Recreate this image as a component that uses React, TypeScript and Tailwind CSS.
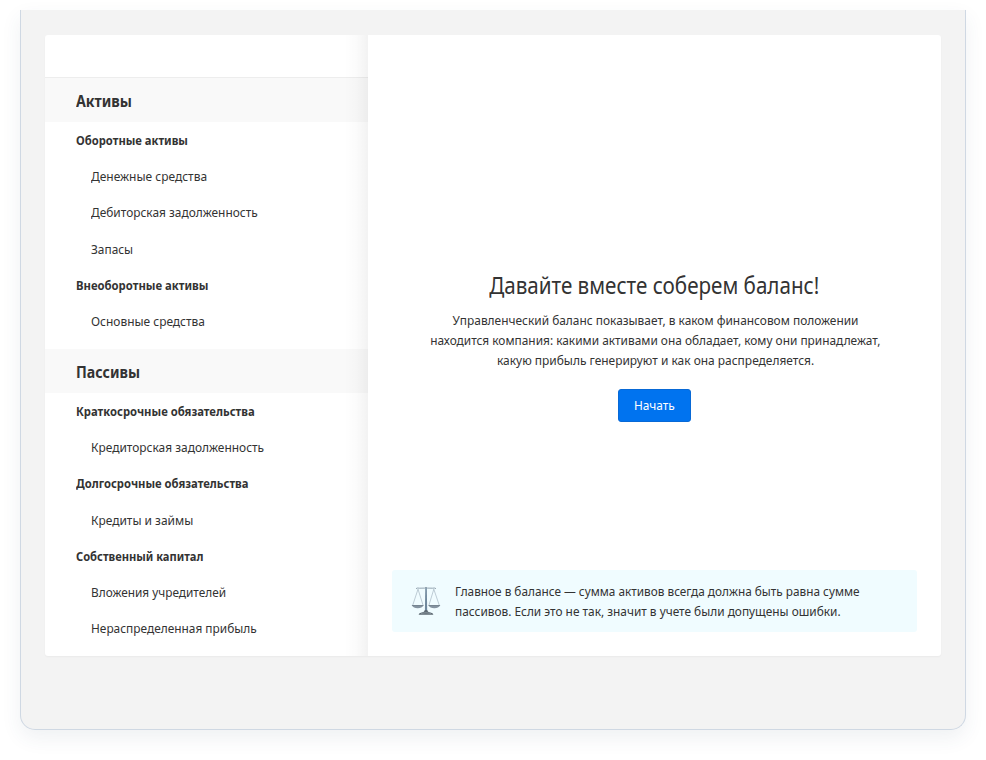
type Row = { text: string; scale: string; group?: boolean };

const assets: Row[] = [
  { text: "Оборотные активы", scale: "scale-x-[0.864]", group: true },
  { text: "Денежные средства", scale: "scale-x-[0.921]" },
  { text: "Дебиторская задолженность", scale: "scale-x-[0.916]" },
  { text: "Запасы", scale: "scale-x-[0.913]" },
  { text: "Внеоборотные активы", scale: "scale-x-[0.870]", group: true },
  { text: "Основные средства", scale: "scale-x-[0.919]" },
];

const liabilities: Row[] = [
  { text: "Краткосрочные обязательства", scale: "scale-x-[0.867]", group: true },
  { text: "Кредиторская задолженность", scale: "scale-x-[0.918]" },
  { text: "Долгосрочные обязательства", scale: "scale-x-[0.866]", group: true },
  { text: "Кредиты и займы", scale: "scale-x-[0.919]" },
  { text: "Собственный капитал", scale: "scale-x-[0.857]", group: true },
  { text: "Вложения учредителей", scale: "scale-x-[0.910]" },
  { text: "Нераспределенная прибыль", scale: "scale-x-[0.914]" },
];

function Section({ title, titleScale, rows }: { title: string; titleScale: string; rows: Row[] }) {
  return (
    <section>
      <h2 className="flex h-11 items-center bg-[#f9f9f9] pt-[2px] pl-[30.5px] text-[16.5px] font-bold">
        <span className={`origin-left ${titleScale}`}>{title}</span>
      </h2>
      <ul>
        {rows.map((row) => (
          <li
            key={row.text}
            className={`flex h-[36.25px] items-center pt-px text-[13px] whitespace-nowrap ${row.group ? "pl-[30.5px] font-bold" : "pl-[45.75px]"}`}
          >
            <span className={`origin-left ${row.scale}`}>{row.text}</span>
          </li>
        ))}
      </ul>
    </section>
  );
}

function Scales() {
  return (
    <svg className="h-[30px] w-[30px] shrink-0" viewBox="0 0 30 30" fill="none">
      <g stroke="#9aabb8" strokeWidth="0.6">
        <path d="M7 3.2 1.8 19M7 3.2 12 19M22.8 3.2 18 19M22.8 3.2 28.2 19" />
      </g>
      <path d="M5 2.6Q6.6 1.6 8.4 2.2L13.5 2.1 15 1.2 16.5 2.1 21.6 2.2Q23.4 1.6 25 2.6" stroke="#7b8d9c" strokeWidth="0.8" />
      <path d="M14.3 2h1.5l.4 23h-2.3Z" fill="#6e879c" />
      <path d="M.8 19.3h11.8q-1.5 3-5.9 3T.8 19.3ZM17.4 19.3h11.8q-1.5 3-5.9 3t-5.9-3Z" fill="#8493a0" />
      <path d="M.9 19.5h11.6M17.5 19.5h11.6" stroke="#5c6a77" strokeWidth="0.6" />
      <path d="M13.9 24h2.2q.4 2 3.3 2.6 2.8.3 3 2.1H7.6q.2-1.8 3-2.1 2.9-.6 3.3-2.6Z" fill="#5d6973" />
      <path d="M10 27.3q5-1 10 0" stroke="#a7b3bb" strokeWidth="0.6" />
    </svg>
  );
}

export default function App() {
  return (
    <div className="h-[760px] overflow-hidden bg-white px-5 pt-[10px] font-['Noto_Sans','Open_Sans',sans-serif] text-[#333]">
      <div className="h-[720px] rounded-b-[15px] border border-t-0 border-[#cfd8e3] bg-[#f3f3f3] px-6 pt-[25px] shadow-[0_8px_20px_rgba(50,80,100,0.08)]">
        <div className="flex h-[621px] overflow-hidden rounded-[3px] bg-white shadow-[0_1px_2px_rgba(0,0,0,0.04)]">
          <aside className="relative w-[323px] shrink-0 pt-[42px]">
            <div className="h-px bg-[#ededed]" />
            <Section title="Активы" titleScale="scale-x-[0.862]" rows={assets} />
            <div className="h-[9.5px]" />
            <Section title="Пассивы" titleScale="scale-x-[0.858]" rows={liabilities} />
            <div className="absolute inset-y-0 right-0 w-6 bg-linear-to-r from-transparent via-black/[0.015] to-black/[0.05]" />
          </aside>
          <main className="flex flex-1 flex-col items-center">
            <h1 className="mt-[234px] text-[23px] leading-8 whitespace-nowrap scale-x-[0.896]">Давайте вместе соберем баланс!</h1>
            <div className="mt-[9px] flex flex-col items-center pl-[2px] text-[13px] leading-5 whitespace-nowrap">
              <span className="scale-x-[0.916]">Управленческий баланс показывает, в каком финансовом положении</span>
              <span className="scale-x-[0.914]">находится компания: какими активами она обладает, кому они принадлежат,</span>
              <span className="scale-x-[0.919]">какую прибыль генерируют и как она распределяется.</span>
            </div>
            <button className="mt-[19px] flex h-[33px] w-[73px] items-center justify-center rounded-[3px] border border-[#0869d6] bg-[#0073ef] text-[13px] text-white">
              <span className="scale-x-[0.913]">Начать</span>
            </button>
            <div className="mt-[148px] flex h-[62px] w-[525px] items-center rounded-[3px] bg-[#f0fcff] pl-[18.5px]">
              <Scales />
              <p className="ml-[14px] flex flex-col items-start text-[13px] leading-5 whitespace-nowrap">
                <span className="origin-left scale-x-[0.908]">Главное в балансе — сумма активов всегда должна быть равна сумме</span>
                <span className="origin-left scale-x-[0.913]">пассивов. Если это не так, значит в учете были допущены ошибки.</span>
              </p>
            </div>
          </main>
        </div>
      </div>
    </div>
  );
}
